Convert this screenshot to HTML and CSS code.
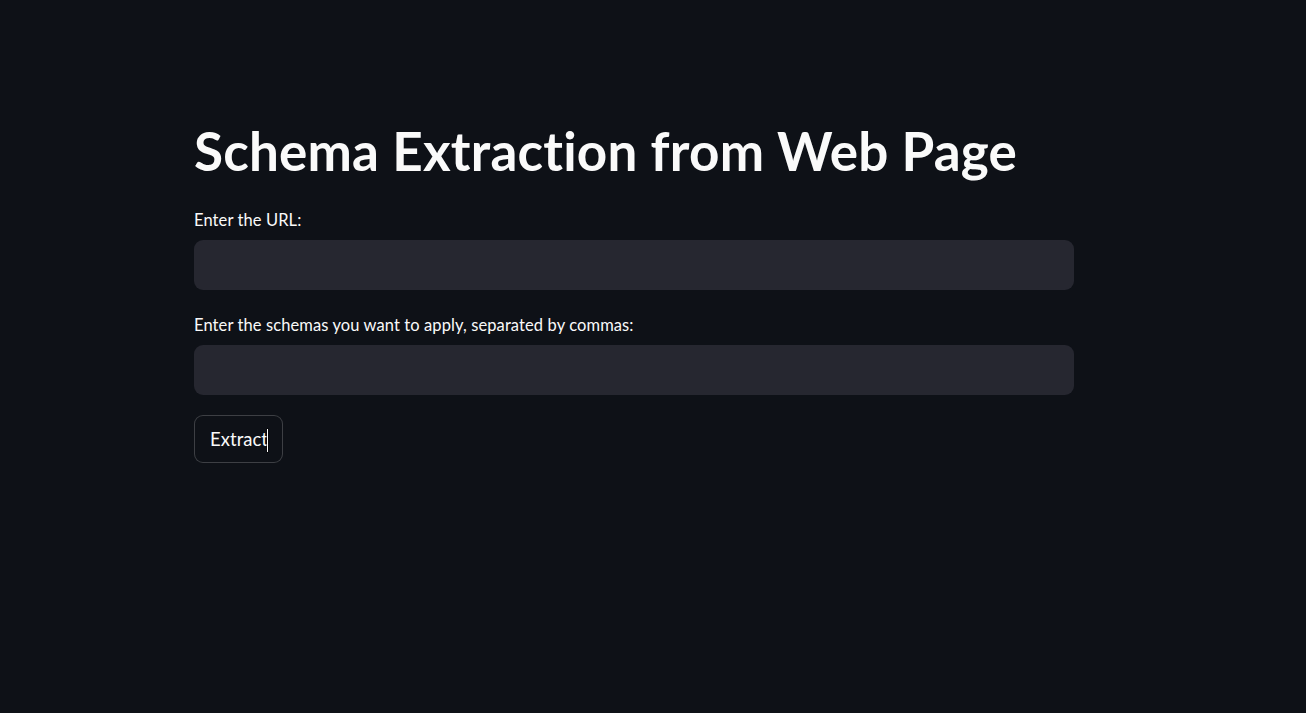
FILE: index.html
```html
<!DOCTYPE html>
<html lang="en">
<head>
<meta charset="utf-8">
<title>Schema Extraction from Web Page</title>
<link rel="stylesheet" href="styles.css">
</head>
<body>
<main class="app">
  <section class="block">
    <h1 class="title">Schema Extraction from Web Page</h1>
    <div class="field">
      <label class="label" for="url">Enter the URL:</label>
      <input class="input" id="url" type="text">
    </div>
    <div class="field">
      <label class="label" for="schemas">Enter the schemas you want to apply, separated by commas:</label>
      <input class="input" id="schemas" type="text">
    </div>
    <div class="actions">
      <button class="btn" type="button">Extract<span class="ibeam"></span></button>
    </div>
  </section>
</main>
</body>
</html>
```

FILE: styles.css
```css
html, body {
  margin: 0;
  padding: 0;
  background: #0e1117;
  color: #fafafa;
  font-family: "Lato", "Open Sans", "Liberation Sans", sans-serif;
}

.app {
  display: flex;
  padding: 0 0 0 194px;
}

.block {
  width: 880px;
  display: flex;
  flex-direction: column;
  gap: 20px;
  padding-top: 118px;
}

.title {
  margin: 0;
  font-size: 53px;
  font-weight: 700;
  line-height: 66px;
  height: 67px;
  letter-spacing: 0.2px;
}

.field {
  display: flex;
  flex-direction: column;
}

.label {
  display: block;
  height: 30px;
  margin-bottom: 5px;
  font-size: 16.5px;
  line-height: 30px;
  letter-spacing: 0.1px;
}

.input {
  box-sizing: border-box;
  height: 50px;
  width: 100%;
  border: none;
  border-radius: 9px;
  background: #262730;
  color: #fafafa;
  padding: 0 15px;
  font: inherit;
  font-size: 17px;
  outline: none;
}

.actions {
  display: flex;
}

.btn {
  position: relative;
  box-sizing: border-box;
  width: 89px;
  height: 48px;
  border: 1px solid rgba(250, 250, 250, 0.2);
  border-radius: 9px;
  background: #0e1117;
  color: #fafafa;
  font-family: inherit;
  font-size: 18.5px;
  padding: 0 0 0 1px;
}

.ibeam {
  position: absolute;
  left: 72px;
  top: 13px;
  width: 1px;
  height: 23px;
  background: #ffffff;
  box-shadow: 0 0 0 0.5px #000;
}
```
